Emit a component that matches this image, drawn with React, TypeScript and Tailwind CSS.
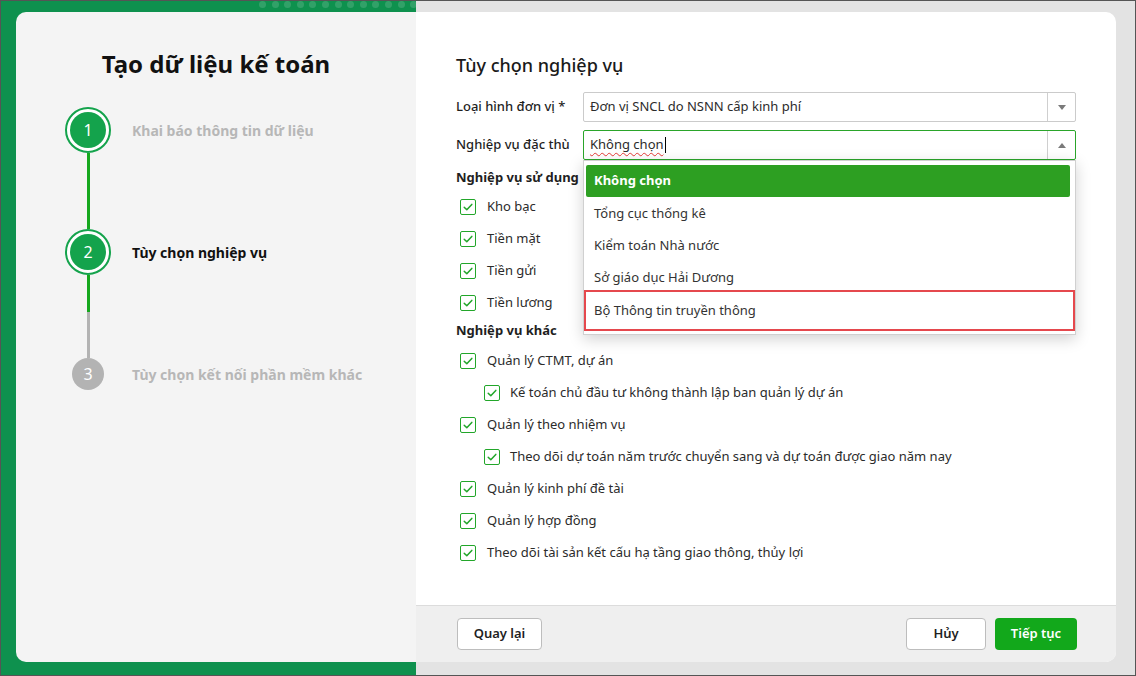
import React from "react";

const Check = () => (
  <span className="w-[16px] h-[16px] shrink-0 rounded-[2px] border-[1.5px] border-[#22a62a] bg-white flex items-center justify-center">
    <svg width="12" height="12" viewBox="0 0 12 12">
      <polyline points="2.2,6.2 4.8,8.8 9.8,3.4" fill="none" stroke="#22a62a" strokeWidth="1.5" strokeLinecap="round" strokeLinejoin="round" />
    </svg>
  </span>
);

const CheckRow = ({ label, indent = false }: { label: string; indent?: boolean }) => (
  <div className={`h-[32px] flex items-center ${indent ? "pl-[28px]" : "pl-[4px]"}`}>
    <Check />
    <span className={`${indent ? "ml-[10px]" : "ml-[11px]"} text-[13px] text-[#2b2b2b]`}>{label}</span>
  </div>
);

const Arrow = ({ up }: { up?: boolean }) => (
  <div className="w-[28px] h-full border-l border-[#cfcfcf] flex items-center justify-center">
    <svg width="8" height="5" viewBox="0 0 8 5">
      {up ? <polygon points="4,0 8,5 0,5" fill="#7a7a7a" /> : <polygon points="0,0 8,0 4,5" fill="#7a7a7a" />}
    </svg>
  </div>
);

export default function App() {
  const dots = Array.from({ length: 13 });
  return (
    <div className="w-[1136px] h-[676px] border border-[#555] flex font-['Noto_Sans',sans-serif] overflow-hidden">
      {/* Left */}
      <div className="relative w-[415px] h-full bg-[#0e914e] pt-[11px] pl-[15px] pb-[13px] overflow-hidden">
        <div className="absolute top-0 left-[258px] flex gap-[5.6px]">
          {dots.map((_, i) => (
            <span key={i} className="w-[7px] h-[7px] rounded-full bg-white/15" />
          ))}
        </div>
        <div className="h-full bg-[#f4f4f4] rounded-l-[10px] pt-[36px]">
          <div className="h-[32px] text-center text-[24px] leading-[32px] font-bold text-[#111]">Tạo dữ liệu kế toán</div>
          <div className="mt-[27px] pl-[49px] flex flex-col">
            <div className="h-[46px] flex items-center">
              <div className="w-[46px] h-[46px] rounded-full border-[2px] border-[#14a34c] bg-white p-[3px]">
                <div className="w-full h-full rounded-full bg-[#14a34c] flex items-center justify-center text-white text-[16px]">1</div>
              </div>
              <span className="ml-[21px] text-[14px] font-bold text-[#b7b7b7]">Khai báo thông tin dữ liệu</span>
            </div>
            <div className="w-[46px] h-[76px] flex justify-center">
              <div className="w-[3px] h-full bg-[#16a81e]" />
            </div>
            <div className="h-[46px] flex items-center">
              <div className="w-[46px] h-[46px] rounded-full border-[2px] border-[#14a34c] bg-white p-[3px]">
                <div className="w-full h-full rounded-full bg-[#14a34c] flex items-center justify-center text-white text-[16px]">2</div>
              </div>
              <span className="ml-[21px] text-[14px] font-bold text-[#111]">Tùy chọn nghiệp vụ</span>
            </div>
            <div className="w-[46px] h-[83px] flex flex-col items-center">
              <div className="w-[3px] h-[37px] bg-[#16a81e]" />
              <div className="w-[3px] h-[46px] bg-[#b3b3b3]" />
            </div>
            <div className="h-[32px] flex items-center">
              <div className="w-[46px] flex justify-center">
                <div className="w-[32px] h-[32px] rounded-full bg-[#b3b3b3] flex items-center justify-center text-white text-[16px]">3</div>
              </div>
              <span className="ml-[21px] text-[14px] font-bold text-[#b7b7b7]">Tùy chọn kết nối phần mềm khác</span>
            </div>
          </div>
        </div>
      </div>

      {/* Right */}
      <div className="flex-1 h-full bg-[#e3e3e3] pt-[11px] pr-[19px] pb-[13px]">
        <div className="h-full bg-white rounded-r-[10px] flex flex-col">
          <div className="flex-1 px-[40px] pt-[40px]">
            <div className="h-[26px] text-[18px] leading-[26px] font-medium text-[#1a1a1a]">Tùy chọn nghiệp vụ</div>

            <div className="mt-[14px] h-[30px] flex items-center">
              <div className="w-[127px] text-[13px] font-medium text-[#1f1f1f]">Loại hình đơn vị *</div>
              <div className="flex-1 h-[30px] border border-[#cbcbcb] rounded-[2px] flex items-center">
                <div className="flex-1 pl-[6px] text-[13px] text-[#2b2b2b]">Đơn vị SNCL do NSNN cấp kinh phí</div>
                <Arrow />
              </div>
            </div>

            <div className="mt-[8px] h-[30px] flex items-center">
              <div className="w-[127px] text-[13px] font-medium text-[#1f1f1f]">Nghiệp vụ đặc thù</div>
              <div className="relative flex-1 h-[30px] border border-[#2aa52a] rounded-[2px] flex items-center">
                <div className="flex-1 pl-[6px] text-[13px] text-[#2b2b2b] flex items-center">
                  <span className="underline decoration-wavy decoration-[#e53935] decoration-1 underline-offset-[3px]">Không chọn</span>
                  <span className="w-[1px] h-[16px] bg-black ml-[1px]" />
                </div>
                <Arrow up />
                {/* dropdown */}
                <div className="absolute left-[-1px] right-[-1px] top-[29px] z-10 bg-white border border-[#d0d0d0] shadow-[0_4px_14px_rgba(0,0,0,0.18)] pt-[4px] pb-[3px]">
                  <div className="ml-[2px] mr-[5px] h-[32px] rounded-[2px] bg-[#2d9f22] flex items-center pl-[8px] text-[13px] font-bold text-white">Không chọn</div>
                  <div className="h-[32px] flex items-center pl-[10px] pt-[1px] text-[13px] text-[#333]">Tổng cục thống kê</div>
                  <div className="h-[32px] flex items-center pl-[10px] pt-[1px] text-[13px] text-[#333]">Kiểm toán Nhà nước</div>
                  <div className="h-[32px] flex items-center pl-[10px] pt-[1px] text-[13px] text-[#333]">Sở giáo dục Hải Dương</div>
                  <div className="-mt-[3px] h-[41px] border-[2px] border-[#e5484d] flex items-center pl-[8px] text-[13px] text-[#333]">Bộ Thông tin truyền thông</div>
                </div>
              </div>
            </div>

            <div className="mt-[5px] h-[26px] leading-[24px] text-[13px] font-bold text-[#1f1f1f]">Nghiệp vụ sử dụng</div>
            <CheckRow label="Kho bạc" />
            <CheckRow label="Tiền mặt" />
            <CheckRow label="Tiền gửi" />
            <CheckRow label="Tiền lương" />
            <div className="h-[26px] leading-[22px] text-[13px] font-bold text-[#1f1f1f]">Nghiệp vụ khác</div>
            <CheckRow label="Quản lý CTMT, dự án" />
            <CheckRow label="Kế toán chủ đầu tư không thành lập ban quản lý dự án" indent />
            <CheckRow label="Quản lý theo nhiệm vụ" />
            <CheckRow label="Theo dõi dự toán năm trước chuyển sang và dự toán được giao năm nay" indent />
            <CheckRow label="Quản lý kinh phí đề tài" />
            <CheckRow label="Quản lý hợp đồng" />
            <CheckRow label="Theo dõi tài sản kết cấu hạ tầng giao thông, thủy lợi" />
          </div>

          <div className="h-[57px] shrink-0 border-t border-[#dcdcdc] bg-[#efefef] rounded-br-[10px] flex items-center justify-between pl-[41px] pr-[39px]">
            <button className="w-[85px] h-[32px] bg-white border border-[#bdbdbd] rounded-[4px] text-[13px] font-semibold text-[#1f1f1f]">Quay lại</button>
            <div className="flex gap-[9px]">
              <button className="w-[80px] h-[32px] bg-white border border-[#bdbdbd] rounded-[4px] text-[13px] font-semibold text-[#1f1f1f]">Hủy</button>
              <button className="w-[82px] h-[32px] bg-[#12a81b] rounded-[4px] text-[13px] font-semibold text-white">Tiếp tục</button>
            </div>
          </div>
        </div>
      </div>
    </div>
  );
}
